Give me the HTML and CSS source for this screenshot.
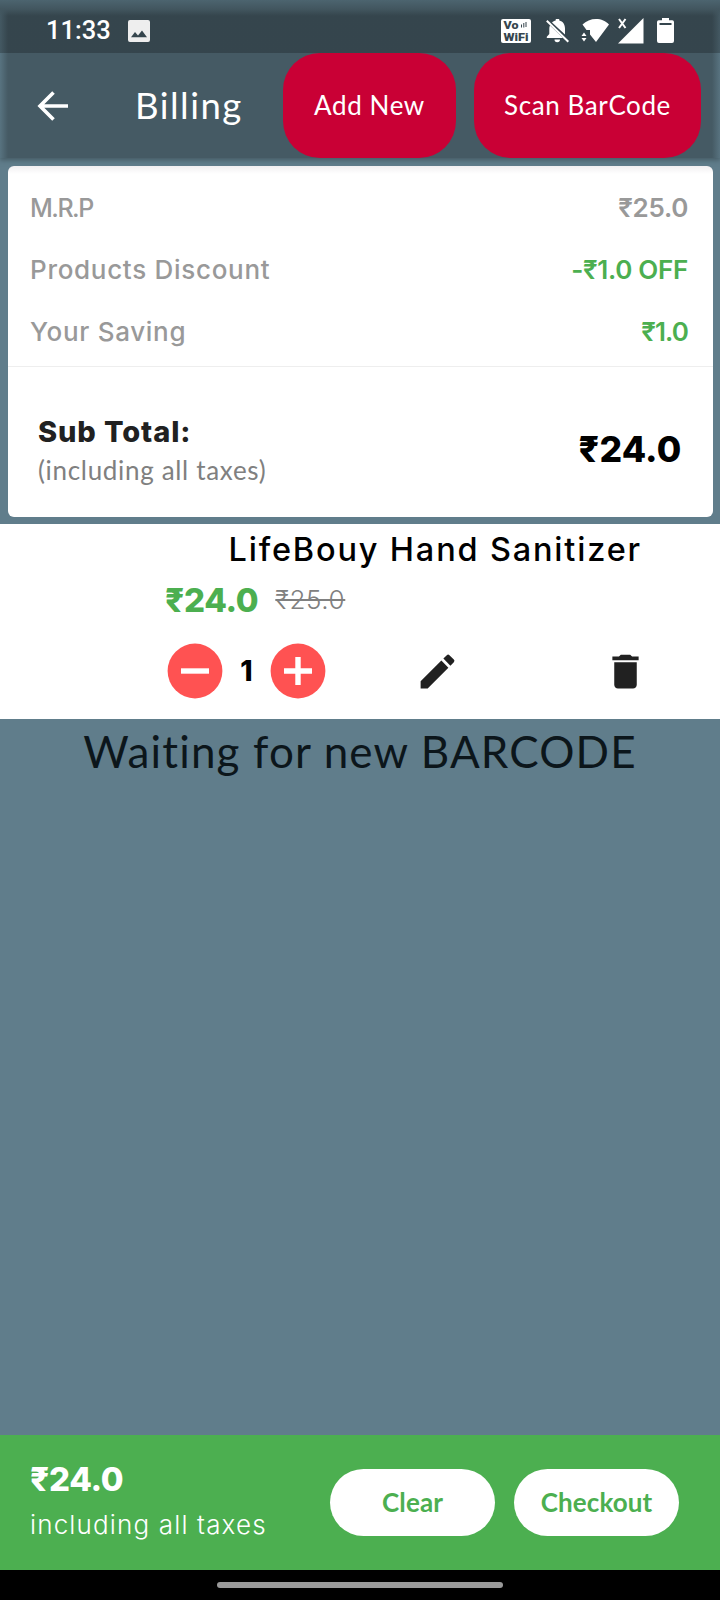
FILE: index.html
```html
<!DOCTYPE html>
<html lang="en">
<head>
<meta charset="utf-8">
<title>Billing</title>
<link rel="stylesheet" href="styles.css">
</head>
<body>
<div class="screen">
  <header class="header">
    <div class="status">
      <span class="clock">11:33</span>
      <svg class="s-image" width="22" height="22" viewBox="0 0 22 22"><path fill="#eee" fill-rule="evenodd" d="M2 0h18a2 2 0 0 1 2 2v18a2 2 0 0 1-2 2H2a2 2 0 0 1-2-2V2a2 2 0 0 1 2-2zM3 17.300h16L14 10.500l-4 5-3-3.500z"/></svg>
      <svg class="s-vowifi" width="30" height="24" viewBox="0 0 30 24"><rect width="30" height="24" rx="2" fill="#fff"/><g class="vowifi"><text x="2.500" y="9.800" textLength="15" lengthAdjust="spacingAndGlyphs">Vo</text><text x="2.500" y="21.500" textLength="25" lengthAdjust="spacingAndGlyphs">WiFi</text></g><path d="M20.500 5.500v3M22.800 4v4.500M25 3v5" stroke="#36454d" stroke-width="1"/></svg>
      <svg class="s-bell" width="24" height="24" viewBox="0 0 24 24"><path fill="#fff" d="M6 3.600C7 2.600 8.500 1.900 9.700 1.600V1a1.800 1.800 0 0 1 3.600 0v.6C17 2.500 19 5.600 19 9.500v6zM4 6.500C3.500 7.500 3.300 8.500 3.300 9.500V15L.8 17.800V19H17zM8.500 20.500h5.500a2.700 2.700 0 0 1-5.500 0z"/><path d="M.8 1.800l21.500 21" stroke="#fff" stroke-width="2"/></svg>
      <svg class="s-wifi" width="29" height="25" viewBox="0 0 29 25"><path fill="#fff" d="M1.500 6.500C5 3 10 1 15 1s10 2 13 5.500L15 24 9 16.500V12H5.500zM.5 18L3 14.500 5.500 18zM.5 20h5L3 23.500z"/></svg>
      <svg class="s-signal" width="26" height="26" viewBox="0 0 26 26"><path fill="#fff" d="M25.500 0v25.500H0z"/><path d="M1 1l6.500 9M7.500 1L1 10" stroke="#fff" stroke-width="2"/></svg>
      <svg class="s-battery" width="17" height="25" viewBox="0 0 17 25"><path fill="#fff" fill-rule="evenodd" d="M5 0h7v2.200h3.200A1.800 1.800 0 0 1 17 4v19a2 2 0 0 1-2 2H2a2 2 0 0 1-2-2V4a1.800 1.800 0 0 1 1.800-1.800H5zM2.500 5v2h12V5z"/></svg>
    </div>
    <div class="appbar">
      <svg class="back" width="32" height="30" viewBox="0 0 32 30"><path d="M16.500 1.500L3 15l13.500 13.500M3.500 15H31" fill="none" stroke="#fff" stroke-width="3.600"/></svg>
      <h1 class="title">Billing</h1>
      <button class="action add">Add New</button>
      <button class="action scan">Scan BarCode</button>
    </div>
  </header>
  <section class="card">
    <div class="rows">
      <div class="row"><span class="mrp">M.R.P</span><b class="mrp-value">₹25.0</b></div>
      <div class="row"><span>Products Discount</span><b class="green off">-₹1.0 OFF</b></div>
      <div class="row"><span>Your Saving</span><b class="green saved">₹1.0</b></div>
    </div>
    <div class="subtotal">
      <div class="labels"><strong class="sub">Sub Total:</strong><span class="incl">(including all taxes)</span></div>
      <strong class="total">₹24.0</strong>
    </div>
  </section>
  <section class="item">
    <h2 class="name">LifeBouy Hand Sanitizer</h2>
    <div class="prices"><b class="price">₹24.0</b><s class="old">₹25.0</s></div>
    <div class="controls">
      <svg class="round" width="56" height="56" viewBox="0 0 56 56"><circle cx="28" cy="28" r="27.400" fill="#ff5252"/><path d="M14 28h28" stroke="#fff" stroke-width="5.400"/></svg>
      <b class="qty">1</b>
      <svg class="round" width="56" height="56" viewBox="0 0 56 56"><circle cx="28" cy="28" r="27.400" fill="#ff5252"/><path d="M14 28h28M28 14v28" stroke="#fff" stroke-width="5.400"/></svg>
      <svg class="edit" width="45" height="45" viewBox="0 0 24 24"><path fill="#212121" d="M3 17.250V21h3.750L17.810 9.940l-3.750-3.750L3 17.250zM20.710 7.040a1 1 0 0 0 0-1.410l-2.340-2.340a1 1 0 0 0-1.410 0l-1.830 1.830 3.750 3.750 1.830-1.830z"/></svg>
      <svg class="trash" width="45" height="45" viewBox="0 0 24 24"><path fill="#212121" d="M6 19c0 1.100.9 2 2 2h8c1.100 0 2-.9 2-2V7H6v12zM19 4h-3.500l-1-1h-5l-1 1H5v2h14V4z"/></svg>
    </div>
  </section>
  <main class="waiting">Waiting for new BARCODE</main>
  <footer class="footer">
    <div class="labels"><b class="fprice">₹24.0</b><span class="ftax">including all taxes</span></div>
    <button class="pill clear">Clear</button>
    <button class="pill checkout">Checkout</button>
  </footer>
  <div class="navbar"><i class="handle"></i></div>
</div>
</body>
</html>
```
FILE: styles.css
```css
* { box-sizing: border-box; }
body { margin: 0; background: #607d8b; }
h1, h2 { margin: 0; font-weight: 400; }
svg { display: block; flex: none; }
.screen {
  width: 720px; height: 1600px;
  display: flex; flex-direction: column;
  overflow: hidden;
  white-space: nowrap;
  font-family: Inter, "Noto Sans", sans-serif;
  font-variant-ligatures: none;
  background: #607d8b;
}
.header {
  height: 158px; flex: none;
  background: linear-gradient(90deg, #587380 0, #455a64 8px, #455a64 712px, #587380);
  box-shadow: 0 2px 5px #455a64;
}
.status {
  height: 53px;
  display: flex; align-items: flex-start;
  padding: 0 46px 0 46px;
  background: linear-gradient(#4c646f 0, #42565f 9px, rgba(0, 0, 0, .23) 16px);
}
.clock { width: 82px; font: 500 25.500px/60px Roboto, sans-serif; color: #fff; }
.s-image { margin-top: 20px; }
.s-vowifi { margin: 19px 0 0 351px; }
.vowifi { font: 900 10px Roboto, sans-serif; fill: #36454d; }
.s-bell { margin: 19px 0 0 15px; }
.s-wifi { margin: 18px 0 0 11px; }
.s-signal { margin: 17.500px 0 0 8px; }
.s-battery { margin: 18px 0 0 13px; }
.appbar {
  height: 105px;
  display: flex; align-items: center;
  padding: 0 19px 0 37px;
}
.title { margin-left: 66px; width: 148px; font: 400 36.500px/105px Lato, sans-serif; letter-spacing: 1.500px; color: #fff; }
.action {
  height: 105px; border: 0; padding: 0 0 2px; border-radius: 37px;
  background: #c90035; color: #fff;
  font: 400 26px Lato, sans-serif; letter-spacing: .6px;
}
.add { width: 173px; margin-right: 18px; }
.scan { width: 227px; }
.card {
  margin: 7.500px 7.500px 7.500px; height: 351px; flex: none;
  border-radius: 6px;
  background: linear-gradient(#f1eff1, #fff 8px);
}
.rows { height: 201px; padding: 11px 24.500px 0 22.500px; border-bottom: 1px solid #eee; }
.row {
  height: 62px; display: flex; align-items: center; justify-content: space-between;
  font-size: 26px; font-weight: 500; letter-spacing: .7px; color: #999;
}
.row b { font-weight: 600; letter-spacing: -.3px; }
.row .mrp { font-size: 25px; letter-spacing: -1.500px; }
.row .off { letter-spacing: -.3px; }
.row .saved { letter-spacing: -.9px; }
.row .green { color: #4caf50; }
.subtotal { height: 150px; padding: 19px 31px 0 30.500px; display: flex; align-items: center; justify-content: space-between; }
.labels { display: flex; flex-direction: column; }
.sub { font-size: 29px; line-height: 39px; font-weight: 800; letter-spacing: .9px; color: #212121; }
.incl { font: 400 26px/39px Lato, sans-serif; letter-spacing: .68px; color: #808080; }
.total { margin-top: -3px; font-size: 35.500px; font-weight: 800; letter-spacing: .2px; color: #000; }
.item { height: 195px; flex: none; background: #fff; padding: 6px 78px 0 165px; }
.name { font-size: 32.500px; line-height: 40px; text-align: right; font-weight: 500; letter-spacing: 1.820px; }
.prices { display: flex; align-items: center; gap: 17px; height: 59px; }
.price { font-size: 33px; font-weight: 800; letter-spacing: -.3px; color: #4caf50; }
.old { font-size: 26px; font-weight: 300; letter-spacing: .6px; color: #808080; }
.controls { display: flex; align-items: center; height: 84px; margin-left: 2px; }
.qty { width: 47px; flex: none; text-align: center; font-size: 28px; font-weight: 800; }
.edit { margin-left: 89px; }
.trash { margin-left: 143px; }
.waiting { flex: 1; padding-top: 2px; text-align: center; font: 400 44px/60px Lato, sans-serif; letter-spacing: 1.150px; color: #0c161b; }
.footer { height: 135px; flex: none; display: flex; align-items: center; padding: 0 41px 0 30px; background: #4caf50; color: #fff; }
.footer .labels { width: 300px; padding-bottom: 1px; }
.fprice { font-size: 33px; line-height: 45px; font-weight: 800; letter-spacing: -.3px; }
.ftax { font-size: 26px; line-height: 45px; font-weight: 300; letter-spacing: 1.150px; }
.pill { width: 165px; height: 67px; flex: none; border: 0; padding: 0 0 2px; border-radius: 34px; background: #fff; color: #4caf50; font: 700 26px Lato, sans-serif; letter-spacing: .1px; }
.clear { margin-right: 19px; }
.navbar { height: 30px; flex: none; background: #000; display: flex; justify-content: center; padding-top: 12px; }
.handle { width: 286px; height: 6px; border-radius: 3px; background: #999; }
```
